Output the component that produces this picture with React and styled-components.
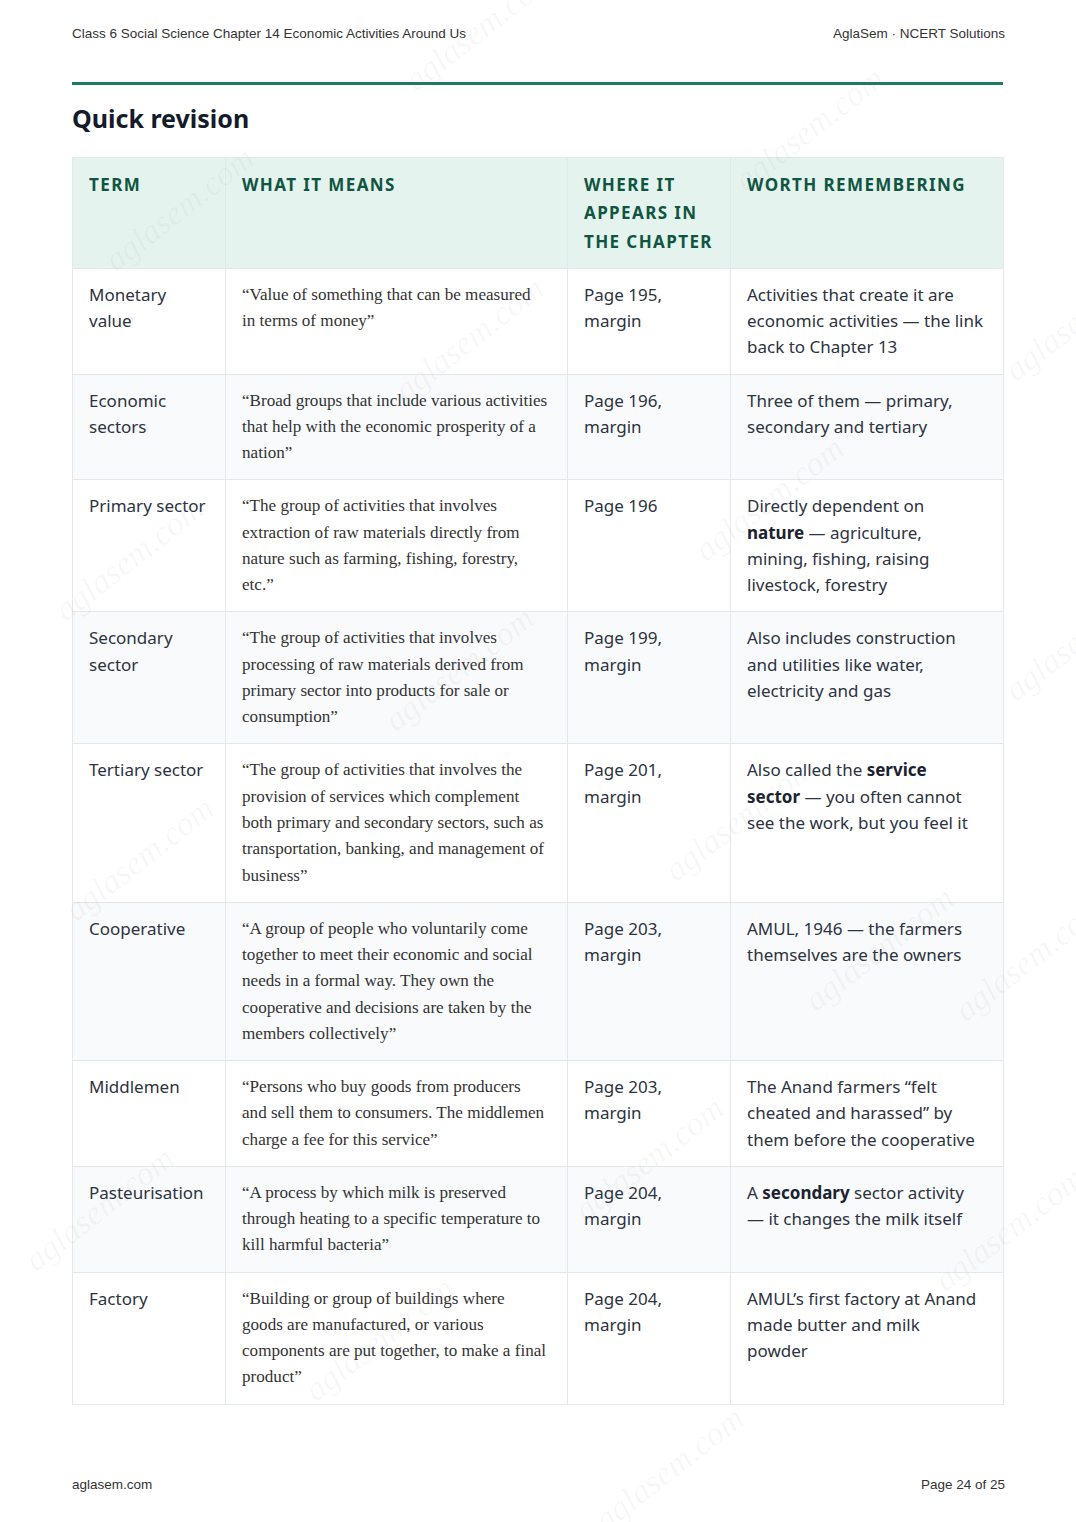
import React from "react";
import styled, { createGlobalStyle } from "styled-components";

const GlobalStyle = createGlobalStyle`
  html, body {
    margin: 0;
    padding: 0;
    background: #ffffff;
  }
  body {
    font-family: "Noto Sans", "Open Sans", sans-serif;
    color: #2d3340;
  }
`;

const Page = styled.div`
  position: relative;
  width: 1076px;
  height: 1522px;
  box-sizing: border-box;
  padding: 26px 73px 0 72px;
  display: flex;
  flex-direction: column;
  overflow: hidden;
`;

const RunningHead = styled.header`
  display: flex;
  justify-content: space-between;
  margin-right: -2px;
  font-family: "Liberation Sans", Arial, sans-serif;
  font-size: 13.5px;
  line-height: 16px;
  color: #333;
`;

const Rule = styled.hr`
  margin: 40px 0 0;
  border: 0;
  height: 3px;
  background: #1e7a62;
`;

const Title = styled.h1`
  margin: 16px 0 22px;
  font-size: 25px;
  line-height: 34px;
  font-weight: 700;
  color: #141b2b;
`;

const Table = styled.table`
  width: 931px;
  border-collapse: collapse;
  table-layout: fixed;
`;

const Head = styled.th`
  background: #e5f3ee;
  border: 1px solid #e3e8ec;
  padding: 13px 16px 12px;
  text-align: left;
  vertical-align: top;
  font-size: 17px;
  line-height: 28.3px;
  font-weight: 700;
  letter-spacing: 1.4px;
  text-transform: uppercase;
  color: #0f5541;
`;

const Row = styled.tr`
  background: ${(p) => (p.$shaded ? "#f8fafc" : "#ffffff")};
`;

const Cell = styled.td`
  border: 1px solid #e3e8ec;
  padding: 13px 16px 12.85px;
  vertical-align: top;
  font-size: 17px;
  line-height: 26.3px;
  color: #2d3340;
`;

const Quote = styled(Cell)`
  font-family: "Liberation Serif", "Times New Roman", serif;
  font-size: 17.1px;
  color: #333;
`;

const Line = styled.span`
  display: block;
  white-space: nowrap;
`;

const Strong = styled.b`
  font-weight: 700;
  color: #1b2230;
`;

const Footer = styled.footer`
  margin-top: auto;
  margin-bottom: 29px;
  margin-right: -2px;
  display: flex;
  justify-content: space-between;
  font-family: "Liberation Sans", Arial, sans-serif;
  font-size: 13.5px;
  line-height: 16px;
  color: #333;
`;

const Watermark = styled.span`
  position: absolute;
  font-family: "Liberation Serif", serif;
  font-style: italic;
  font-size: 34px;
  color: rgba(120, 120, 120, 0.06);
  transform: rotate(-38deg);
  white-space: nowrap;
  pointer-events: none;
`;

const marks = [
  [390, 10], [90, 190], [380, 320], [720, 110], [40, 540], [680, 480],
  [990, 300], [990, 620], [370, 650], [50, 840], [650, 800], [940, 940],
  [790, 930], [560, 1140], [10, 1190], [920, 1210], [290, 1320], [580, 1450],
];

// line breaks follow the printed page
const rows = [
  {
    term: "Monetary value",
    means: ["“Value of something that can be measured", "in terms of money”"],
    where: "Page 195, margin",
    worth: ["Activities that create it are", "economic activities — the link", "back to Chapter 13"],
  },
  {
    term: "Economic sectors",
    means: [
      "“Broad groups that include various activities",
      "that help with the economic prosperity of a",
      "nation”",
    ],
    where: "Page 196, margin",
    worth: ["Three of them — primary,", "secondary and tertiary"],
  },
  {
    term: "Primary sector",
    means: [
      "“The group of activities that involves",
      "extraction of raw materials directly from",
      "nature such as farming, fishing, forestry,",
      "etc.”",
    ],
    where: "Page 196",
    worth: [
      "Directly dependent on",
      <><Strong>nature</Strong> — agriculture,</>,
      "mining, fishing, raising",
      "livestock, forestry",
    ],
  },
  {
    term: "Secondary sector",
    means: [
      "“The group of activities that involves",
      "processing of raw materials derived from",
      "primary sector into products for sale or",
      "consumption”",
    ],
    where: "Page 199, margin",
    worth: ["Also includes construction", "and utilities like water,", "electricity and gas"],
  },
  {
    term: "Tertiary sector",
    means: [
      "“The group of activities that involves the",
      "provision of services which complement",
      "both primary and secondary sectors, such as",
      "transportation, banking, and management of",
      "business”",
    ],
    where: "Page 201, margin",
    worth: [
      <>Also called the <Strong>service</Strong></>,
      <><Strong>sector</Strong> — you often cannot</>,
      "see the work, but you feel it",
    ],
  },
  {
    term: "Cooperative",
    means: [
      "“A group of people who voluntarily come",
      "together to meet their economic and social",
      "needs in a formal way. They own the",
      "cooperative and decisions are taken by the",
      "members collectively”",
    ],
    where: "Page 203, margin",
    worth: ["AMUL, 1946 — the farmers", "themselves are the owners"],
  },
  {
    term: "Middlemen",
    means: [
      "“Persons who buy goods from producers",
      "and sell them to consumers. The middlemen",
      "charge a fee for this service”",
    ],
    where: "Page 203, margin",
    worth: ["The Anand farmers “felt", "cheated and harassed” by", "them before the cooperative"],
  },
  {
    term: "Pasteurisation",
    means: [
      "“A process by which milk is preserved",
      "through heating to a specific temperature to",
      "kill harmful bacteria”",
    ],
    where: "Page 204, margin",
    worth: [<>A <Strong>secondary</Strong> sector activity</>, "— it changes the milk itself"],
  },
  {
    term: "Factory",
    means: [
      "“Building or group of buildings where",
      "goods are manufactured, or various",
      "components are put together, to make a final",
      "product”",
    ],
    where: "Page 204, margin",
    worth: ["AMUL’s first factory at Anand", "made butter and milk", "powder"],
  },
];

export default function App() {
  return (
    <Page>
      <GlobalStyle />
      <RunningHead>
        <span>Class 6 Social Science Chapter 14 Economic Activities Around Us</span>
        <span>AglaSem · NCERT Solutions</span>
      </RunningHead>
      <Rule />
      <Title>Quick revision</Title>
      <Table>
        <colgroup>
          <col style={{ width: 153 }} />
          <col style={{ width: 342 }} />
          <col style={{ width: 163 }} />
          <col style={{ width: 273 }} />
        </colgroup>
        <thead>
          <tr>
            <Head>Term</Head>
            <Head>What it means</Head>
            <Head>Where it appears in the chapter</Head>
            <Head>Worth remembering</Head>
          </tr>
        </thead>
        <tbody>
          {rows.map((r, i) => (
            <Row key={r.term} $shaded={i % 2 === 1}>
              <Cell>{r.term}</Cell>
              <Quote>
                {r.means.map((l, j) => <Line key={j}>{l}</Line>)}
              </Quote>
              <Cell>{r.where}</Cell>
              <Cell>
                {r.worth.map((l, j) => <Line key={j}>{l}</Line>)}
              </Cell>
            </Row>
          ))}
        </tbody>
      </Table>
      <Footer>
        <span>aglasem.com</span>
        <span>Page 24 of 25</span>
      </Footer>
      {marks.map(([x, y], i) => (
        <Watermark key={i} style={{ left: x, top: y }}>aglasem.com</Watermark>
      ))}
    </Page>
  );
}
